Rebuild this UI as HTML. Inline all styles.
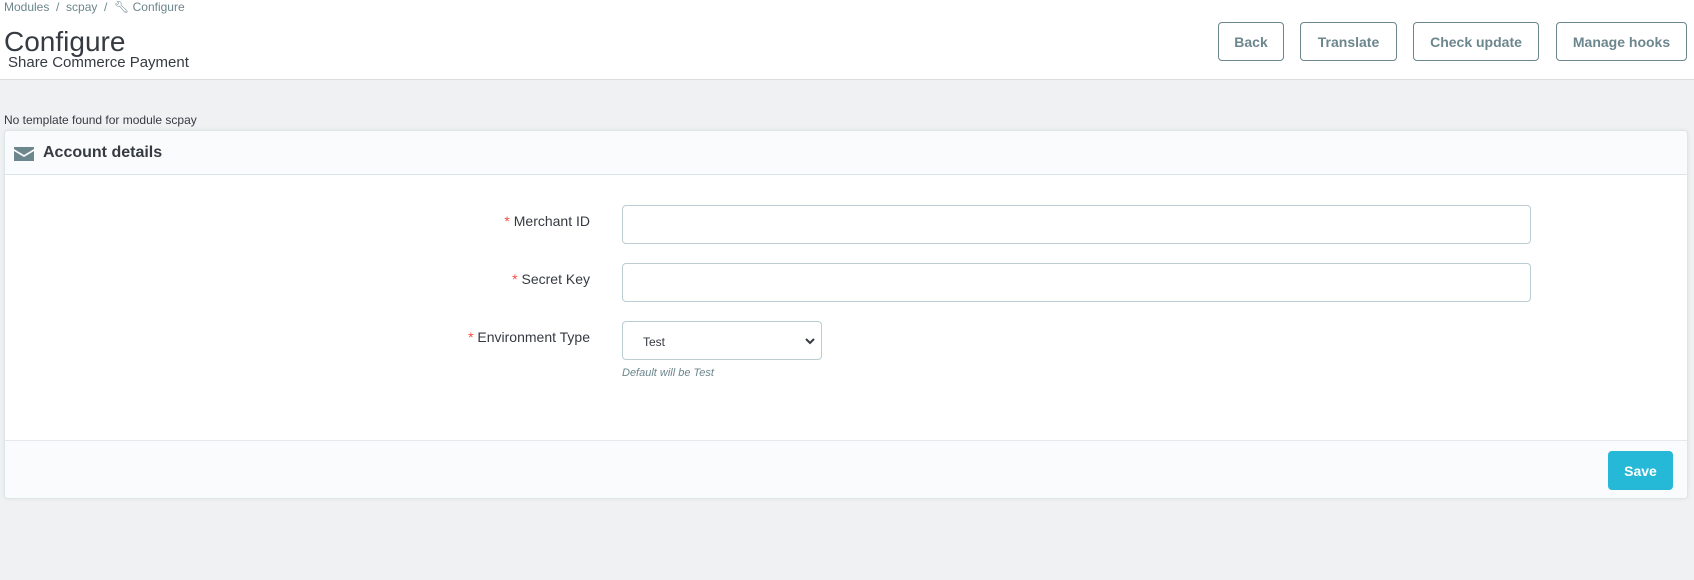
<!DOCTYPE html>
<html><head><style>
*{box-sizing:border-box;margin:0;padding:0}
body{width:1694px;height:580px;background:#eff1f2;font-family:"Liberation Sans",sans-serif;position:relative;overflow:hidden;color:#363a41}
.hdr{position:absolute;left:0;top:0;width:1694px;height:80px;background:#fff;border-bottom:1px solid #dcdcdc}
.bc{position:absolute;left:4px;top:0;font-size:12px;color:#6c868e;line-height:15px}
h1{position:absolute;left:4px;top:26px;font-size:28px;font-weight:normal;color:#363a41;line-height:32px}
.sub{position:absolute;left:8px;top:54px;font-size:15px;color:#363a41}
.btn{position:absolute;top:22px;height:39px;border:1px solid #6c868e;border-radius:4px;background:#fff;color:#6c868e;font-size:14px;font-weight:bold;display:flex;align-items:center;justify-content:center}
.note{position:absolute;left:4px;top:113px;font-size:12px;color:#363a41}
.panel{position:absolute;left:4px;top:130px;width:1684px;height:369px;background:#fff;border:1px solid #dbe6e9;border-radius:4px;box-shadow:0 0 4px rgba(0,0,0,.06);overflow:hidden}
.ph{height:44px;background:#fafbfc;border-bottom:1px solid #dbe6e9;display:flex;align-items:center;padding-left:9px;font-size:16px;font-weight:bold;color:#363a41}
.ph svg{margin-right:9px}
.lbl{position:absolute;right:1097px;font-size:14px;color:#363a41;text-align:right}
.lbl b{color:#f54c3e;font-weight:normal}
.inp{position:absolute;left:617px;width:909px;height:39px;border:1px solid #bbcdd2;border-radius:4px;background:#fff}
.sel{position:absolute;left:617px;top:190px;width:200px;height:39px;border:1px solid #bbcdd2;border-radius:4px;font-size:12px;padding:13px 20px;color:#363a41}
.help{position:absolute;left:617px;top:236px;font-size:11px;font-style:italic;color:#6c868e}
.foot{position:absolute;left:0;top:309px;width:100%;height:60px;background:#fafbfc;border-top:1px solid #e4e9eb}
.save{position:absolute;left:1603px;top:320px;width:65px;height:39px;background:#25b9d7;border-radius:4px;color:#fff;font-weight:bold;font-size:14px;display:flex;align-items:center;justify-content:center}
</style></head><body>
<div class="hdr">
<div class="bc">Modules &nbsp;/&nbsp; scpay &nbsp;/&nbsp; &#128295;&#xFE0E; Configure</div>
<h1>Configure</h1>
<div class="sub">Share Commerce Payment</div>
<div class="btn" style="left:1218px;width:66px">Back</div>
<div class="btn" style="left:1300px;width:97px">Translate</div>
<div class="btn" style="left:1413px;width:126px">Check update</div>
<div class="btn" style="left:1556px;width:131px">Manage hooks</div>
</div>
<div class="note">No template found for module scpay</div>
<div class="panel">
<div class="ph"><svg width="20" height="16" viewBox="0 0 20 16"><path d="M0 2h20v2l-10 6L0 4z" fill="#6c868e"/><path d="M0 6l10 6 10-6v10H0z" fill="#6c868e"/></svg>Account details</div>
<div class="lbl" style="top:82px"><b>*</b> Merchant ID</div>
<div class="inp" style="top:74px"></div>
<div class="lbl" style="top:140px"><b>*</b> Secret Key</div>
<div class="inp" style="top:132px"></div>
<div class="lbl" style="top:198px"><b>*</b> Environment Type</div>
<div class="sel">Test<svg style="position:absolute;right:6px;top:15px" width="10" height="8" viewBox="0 0 10 8"><path d="M1 2l4 4 4-4" stroke="#363a41" stroke-width="2" fill="none"/></svg></div>
<div class="help">Default will be Test</div>
<div class="foot"></div>
<div class="save">Save</div>
</div>
</body></html>
